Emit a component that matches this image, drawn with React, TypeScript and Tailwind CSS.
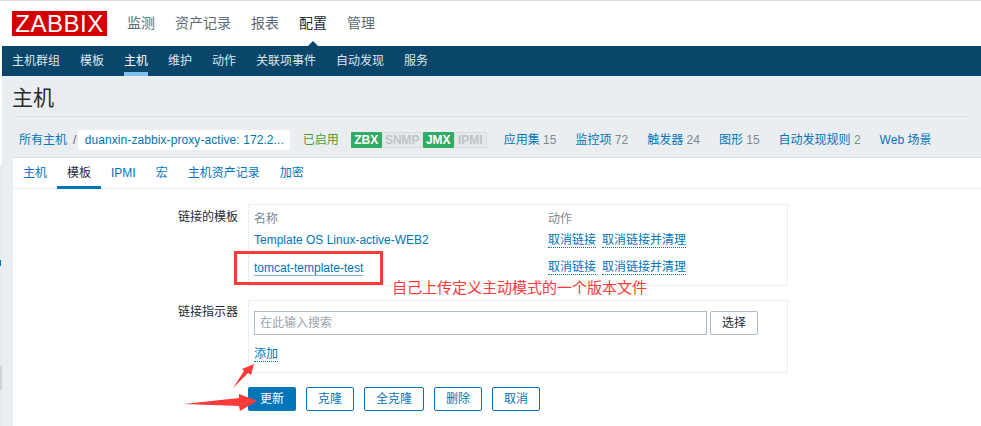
const topNav = ["监测", "资产记录", "报表", "配置", "管理"];
const subNav = ["主机群组", "模板", "主机", "维护", "动作", "关联项事件", "自动发现", "服务"];
const tabs = ["主机", "模板", "IPMI", "宏", "主机资产记录", "加密"];
const hostLinks = [
  { label: "应用集", count: "15" },
  { label: "监控项", count: "72" },
  { label: "触发器", count: "24" },
  { label: "图形", count: "15" },
  { label: "自动发现规则", count: "2" },
  { label: "Web 场景", count: "" },
];
const badges = [
  { label: "ZBX", on: true, width: "w-[31px]" },
  { label: "SNMP", on: false, width: "w-[41px]" },
  { label: "JMX", on: true, width: "w-[31px]" },
  { label: "IPMI", on: false, width: "w-[33px]" },
];

function ActionLinks() {
  return (
    <div className="flex gap-[6px]">
      <a className="text-[#0275b8] border-b border-dotted border-[#0275b8] leading-[14px]">取消链接</a>
      <a className="text-[#0275b8] border-b border-dotted border-[#0275b8] leading-[14px]">取消链接并清理</a>
    </div>
  );
}

function OutlineButton({ label, width }: { label: string; width: string }) {
  return (
    <button className={`${width} h-[24px] rounded-[2px] border border-[#0275b8] text-[#0275b8] bg-white text-[12px]`}>
      {label}
    </button>
  );
}

export default function App() {
  return (
    <div
      className="relative w-[981px] h-[426px] overflow-hidden bg-white text-[12px] text-[#1f2c33]"
      style={{ fontFamily: '"Liberation Sans", "Noto Sans CJK SC", sans-serif' }}
    >
      <div className="h-px bg-[#dcdde0]" />

      <div className="flex h-[45px] items-center pl-[12px]">
        <div className="w-[95px] h-[25px] bg-[#d40000] text-white text-[24px] leading-[25px] text-center tracking-[0.5px]">
          ZABBIX
        </div>
        <div className="relative flex ml-[10px] h-full items-center text-[14px] text-[#5c6b74]">
          {topNav.map((name) => (
            <span key={name} className={`px-[10px] ${name === "配置" ? "relative text-[#1f2c33]" : ""}`}>
              {name}
              {name === "配置" && (
                <span className="absolute left-1/2 -translate-x-1/2 top-[28px] w-0 h-0 border-x-[8px] border-x-transparent border-b-[8px] border-b-[#0a466a]" />
              )}
            </span>
          ))}
        </div>
      </div>

      <div className="ml-[2px] flex h-[30px] gap-[20px] pl-[10px] bg-[#0a466a] text-[#dbe7ee]">
        {subNav.map((name) => (
          <span
            key={name}
            className={`h-[30px] leading-[30px] ${name === "主机" ? "border-b-[4px] border-[#7dc0ee] text-white" : ""}`}
          >
            {name}
          </span>
        ))}
      </div>

      <div className="ml-[2px] h-[350px] bg-[#ebeef0]">
        <div className="mx-[10px] h-[41px] border-b border-[#dfe3e6] text-[21px] leading-[44px] text-[#1f2c33]">
          主机
        </div>

        <div className="flex h-[40px] items-center pl-[17px] pt-[6px]">
          <a className="text-[#0275b8]">所有主机</a>
          <span className="ml-[6px] text-[#5c6b74]">/</span>
          <span className="ml-[1.4px] w-[212px] h-[20px] rounded-[2px] bg-white pl-[7px] leading-[20px] tracking-[0.08px] text-[#0275b8]">
            duanxin-zabbix-proxy-active: 172.2...
          </span>
          <span className="ml-[13px] text-[#4f9a2f]">已启用</span>
          <div className="ml-[12px] flex h-[16px] w-[136px] text-[12px] font-bold leading-[16px]">
            {badges.map((b) => (
              <span
                key={b.label}
                className={
                  b.on
                    ? `${b.width} text-center bg-[#2fac66] text-white rounded-[1px]`
                    : `${b.width} text-center bg-[#e6e8ea] text-[#bcc4c9] border border-[#d8dcdf] leading-[14px]`
                }
              >
                {b.label}
              </span>
            ))}
          </div>
          <div className="ml-[17px] flex gap-[19px]">
            {hostLinks.map((l) => (
              <span key={l.label} className="text-[#7b8a93]">
                <a className="text-[#0275b8]">{l.label}</a>
                {l.count && ` ${l.count}`}
              </span>
            ))}
          </div>
        </div>

        <div className="ml-[11px] h-[269px] border-t border-[#dfe3e6] bg-white">
          <div className="flex h-[31px] border-b border-[#ebeef0]">
            {tabs.map((t) => (
              <span
                key={t}
                className={`h-[31px] px-[10px] leading-[31px] ${
                  t === "模板" ? "border-b-[3px] border-[#0275b8] text-[#1f2c33]" : "text-[#0275b8]"
                }`}
              >
                {t}
              </span>
            ))}
          </div>

          <div className="flex pt-[15px]">
            <div className="w-[225px] shrink-0 pr-0 text-right leading-[14px] pt-[6px]">链接的模板</div>
            <div className="ml-[10px] w-[540px] h-[82px] border border-[#ebeef0] pl-[5px] pt-[5px]">
              <div className="flex h-[17px] items-center text-[#7b8a93]">
                <span className="w-[294px]">名称</span>
                <span>动作</span>
              </div>
              <div className="flex h-[27px] items-center">
                <a className="w-[294px] pb-[2px] text-[#0275b8]">Template OS Linux-active-WEB2</a>
                <ActionLinks />
              </div>
              <div className="flex h-[27px] items-center">
                <div className="w-[294px]">
                  <a className="text-[#0275b8] border-b border-[#7db9dd] leading-[14px] inline-block">
                    tomcat-template-test
                  </a>
                </div>
                <ActionLinks />
              </div>
            </div>
          </div>

          <div className="flex pt-[14px]">
            <div className="w-[225px] shrink-0 text-right leading-[14px] pt-[5px]">链接指示器</div>
            <div className="ml-[10px] w-[540px] h-[73px] border border-[#ebeef0] pl-[5px] pt-[10px]">
              <div className="flex gap-[3px]">
                <div className="w-[453px] h-[24px] border border-[#acbbc5] pl-[5px] leading-[22px] text-[#9aa6ad]">
                  在此输入搜索
                </div>
                <button className="w-[48px] h-[24px] rounded-[2px] border border-[#acbbc5] bg-white text-[#1f2c33] text-[12px]">
                  选择
                </button>
              </div>
              <a className="mt-[12px] inline-block text-[#0275b8] border-b border-dotted border-[#0275b8] leading-[14px]">
                添加
              </a>
            </div>
          </div>

          <div className="flex gap-[10px] pl-[235px] pt-[14px]">
            <button className="w-[48px] h-[24px] rounded-[2px] bg-[#0275b8] text-white text-[12px]">更新</button>
            <OutlineButton label="克隆" width="w-[48px]" />
            <OutlineButton label="全克隆" width="w-[60px]" />
            <OutlineButton label="删除" width="w-[48px]" />
            <OutlineButton label="取消" width="w-[48px]" />
          </div>
        </div>
      </div>

      {/* sliver of the window behind, left of the page */}
      <div className="absolute left-0 top-[165px] w-[2px] h-[261px] bg-[#e8ebee]" />
      <div className="absolute left-0 top-[260px] w-[1px] h-[6px] bg-[#0275b8]" />
      <div className="absolute left-0 top-[366px] w-[2px] h-[24px] bg-[#cfd2d4]" />

      {/* annotations drawn on top of the screenshot */}
      <div className="absolute left-[234px] top-[251px] w-[149px] h-[34px] border-[3px] border-[#fb3a3a]" />
      <span className="absolute left-[392px] top-[279px] text-[15px] leading-[18px] text-[#fb3a3a]">
        自己上传定义主动模式的一个版本文件
      </span>
      <svg className="absolute left-0 top-0" width="981" height="426" viewBox="0 0 981 426">
        <polygon points="184,404 239,398 239,394 257,401 240,411 239,406" fill="#fb3a3a" />
        <polygon points="233,388 244,371 242,369 254,364 251,375 248,373" fill="#fb3a3a" />
      </svg>
    </div>
  );
}
